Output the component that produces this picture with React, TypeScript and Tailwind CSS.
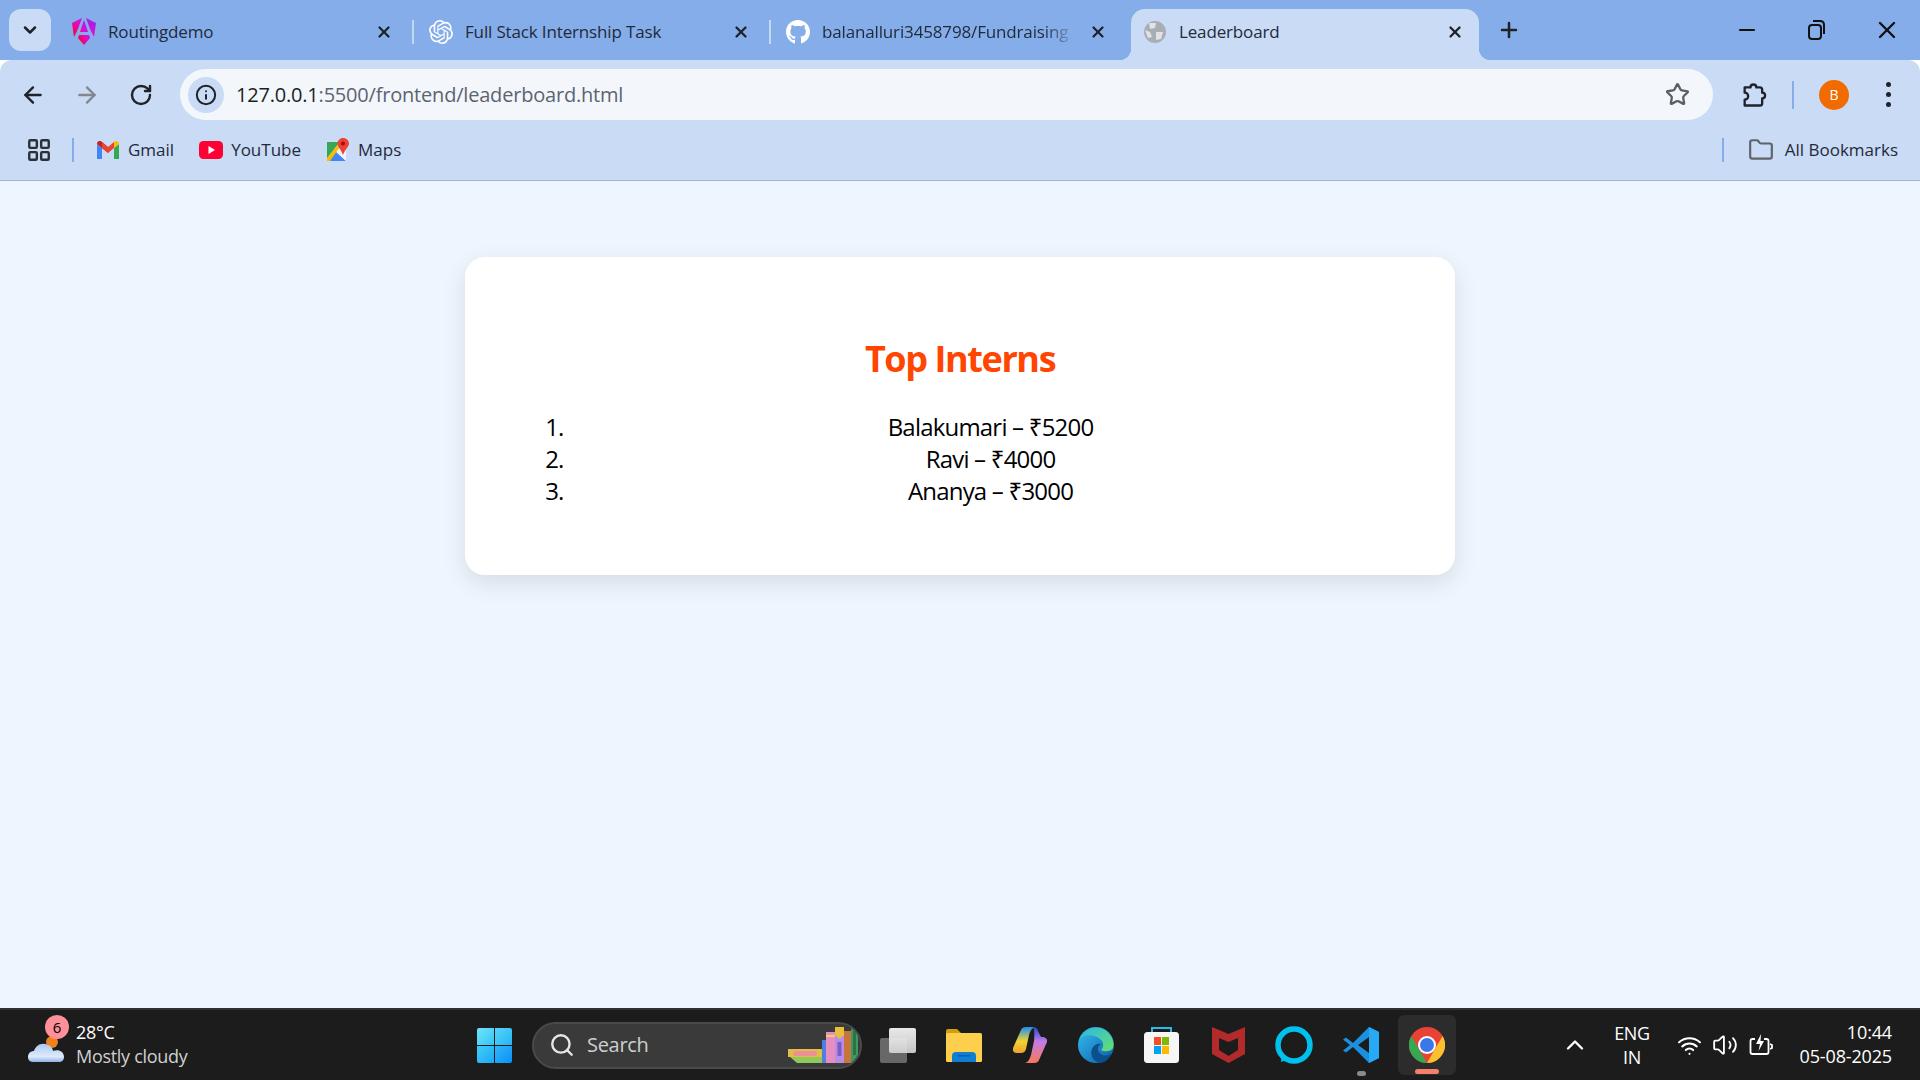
import { Search, Star, Folder, ArrowLeft, ArrowRight, RotateCw, X, Plus, Minus, ChevronDown, ChevronUp, Info, Wifi, Volume2, LayoutGrid } from "lucide-react";
import { FaGithub } from "react-icons/fa";
import { SiOpenai } from "react-icons/si";

const FONT = "font-['Open_Sans','Noto_Sans',sans-serif]";

const AngularIcon = () => (
  <svg width="24" height="28" viewBox="0 0 24 28">
    <defs>
      <linearGradient id="ng" x1="0" y1="1" x2="1" y2="0">
        <stop offset="0" stopColor="#f0060b" />
        <stop offset="0.5" stopColor="#e40ad0" />
        <stop offset="1" stopColor="#7c2ef8" />
      </linearGradient>
    </defs>
    <path d="M10 0 L0 5 L2 19 L6 11 Z M14 0 L24 5 L22 19 L18 11 Z" fill="url(#ng)" />
    <path d="M12 2 L8 14 L16 14 Z M7 17 L17 17 L18 20 L12 27 L6 20 Z" fill="url(#ng)" />
  </svg>
);

const GmailIcon = () => (
  <svg width="22" height="18" viewBox="0 0 22 18">
    <path d="M0 3 L0 18 L5 18 L5 7 Z" fill="#4285f4" />
    <path d="M22 3 L22 18 L17 18 L17 7 Z" fill="#34a853" />
    <path d="M0 3 C0 0 3 -1 5 1 L11 6 L11 12 L0 3 Z" fill="#c5221f" />
    <path d="M5 1 L11 6 L17 1 L17 7 L11 12 L5 7 Z" fill="#ea4335" />
    <path d="M17 1 C19 -1 22 0 22 3 L17 7 Z" fill="#fbbc04" />
  </svg>
);

const YoutubeIcon = () => (
  <svg width="24" height="18" viewBox="0 0 24 18">
    <rect width="24" height="18" rx="4.5" fill="#ff0033" />
    <path d="M9.5 5 L16 9 L9.5 13 Z" fill="#fff" />
  </svg>
);

const MapsIcon = () => (
  <svg width="22" height="24" viewBox="0 0 22 24">
    <path d="M0 4 L13 4 L0 20 Z" fill="#34a853" />
    <path d="M0 23 L0 20 L7 12 L19 23 Z" fill="#4285f4" />
    <path d="M7 12 L13 4 L19 9 L19 23 Z" fill="#f1f3f4" />
    <path d="M0 20 L13 4 L15 6 L3 23 L0 23 Z" fill="#fbbc04" />
    <path d="M16 0 C19.5 0 22 2.5 22 5.5 C22 9 18 11 16 17 C14 11 10.5 9 10.5 5.5 C10.5 2.5 13 0 16 0 Z" fill="#ea4335" />
    <circle cx="16" cy="5.5" r="2" fill="#a50e0e" />
  </svg>
);

const ExtensionIcon = () => (
  <svg width="28" height="28" viewBox="0 0 24 24" fill="none" stroke="#1f2329" strokeWidth="2" strokeLinejoin="round">
    <path d="M4 5.5 H9 a2.5 2.5 0 0 1 5 0 H17 a2 2 0 0 1 2 2 V10 a2.5 2.5 0 0 1 0 5 V19 a2 2 0 0 1 -2 2 H4 V16 a3 3 0 0 0 0 -6 Z" />
  </svg>
);

const WeatherIcon = () => (
  <svg width="38" height="30" viewBox="0 0 38 30">
    <defs>
      <linearGradient id="cloud" x1="0" y1="0" x2="0" y2="1">
        <stop offset="0" stopColor="#a9c9f4" />
        <stop offset="0.7" stopColor="#dfeafb" />
        <stop offset="1" stopColor="#8fb2e6" />
      </linearGradient>
    </defs>
    <circle cx="24" cy="9" r="6" fill="#f0821e" />
    <path d="M5 29 C1 29 0 26 0 24 C0 20 3 18 6 18 C8 12 14 9 20 12 C23 13 25 16 25 18 C31 16 36 19 36 24 C36 27 34 29 31 29 Z" fill="url(#cloud)" />
  </svg>
);

const WindowsIcon = () => (
  <div className="grid h-[35px] w-[35px] grid-cols-2 gap-[1px]">
    <div className="rounded-tl-[2px] bg-gradient-to-br from-[#70e2fb] to-[#2fc5f5]" />
    <div className="rounded-tr-[2px] bg-gradient-to-br from-[#55d5f9] to-[#22b4f4]" />
    <div className="rounded-bl-[2px] bg-gradient-to-br from-[#40cdf7] to-[#1ca8f5]" />
    <div className="rounded-br-[2px] bg-gradient-to-br from-[#2fb8f7] to-[#0c8ff6]" />
  </div>
);

const BooksIcon = () => (
  <svg width="76" height="40" viewBox="0 0 76 40">
    <path d="M0 22 L34 22 L34 30 L0 30 Z" fill="#e3bd4a" />
    <rect x="5" y="24" width="24" height="5" rx="2.5" fill="#ec8f97" />
    <path d="M2 30 L34 30 L34 36 L9 36 Z" fill="#8fc95a" />
    <rect x="34" y="13" width="4" height="23" fill="#4f7fe0" />
    <rect x="38" y="5" width="9" height="31" fill="#e58fc0" />
    <rect x="38" y="8" width="9" height="2" fill="#f0d060" />
    <rect x="47" y="0" width="9" height="36" fill="#b78de8" />
    <path d="M47 0 L56 0 L56 8 L51.5 12 L47 8 Z" fill="#e7bf3f" />
    <rect x="49.5" y="15" width="4" height="14" fill="#7a5bc8" />
    <rect x="56" y="4" width="7" height="32" fill="#c8743a" />
    <rect x="63" y="0" width="7" height="36" fill="#3f9a62" />
    <rect x="65" y="4" width="3" height="24" fill="#2a7548" />
  </svg>
);

const TaskViewIcon = () => (
  <div className="relative h-[35px] w-[36px]">
    <div className="absolute bottom-0 left-0 h-[25px] w-[27px] rounded-[2px] bg-[#686868]" />
    <div className="absolute right-0 top-0 h-[25px] w-[27px] rounded-[2px] bg-gradient-to-b from-white to-[#d8d8d8] opacity-90" />
  </div>
);

const ExplorerIcon = () => (
  <svg width="36" height="33" viewBox="0 0 36 33">
    <path d="M0 2 Q0 0 2 0 L11 0 L15 4 L15 8 L0 8 Z" fill="#d29e0a" />
    <rect x="0" y="4" width="36" height="29" rx="1.5" fill="#fdcf4d" />
    <path d="M6 33 L6 27 Q6 23 10 23 L26 23 Q30 23 30 27 L30 33 Z" fill="#0f7fd6" />
    <rect x="12" y="26" width="12" height="1.5" fill="#0a5ca8" />
  </svg>
);

const CopilotIcon = () => (
  <svg width="34" height="36" viewBox="0 0 34 36">
    <defs>
      <linearGradient id="cop1" x1="0" y1="0" x2="0" y2="1">
        <stop offset="0" stopColor="#1f8ef0" />
        <stop offset="0.55" stopColor="#f2d52f" />
        <stop offset="1" stopColor="#f0a030" />
      </linearGradient>
      <linearGradient id="cop2" x1="0" y1="0" x2="0" y2="1">
        <stop offset="0" stopColor="#1b4fd0" />
        <stop offset="0.4" stopColor="#c47ae8" />
        <stop offset="1" stopColor="#f77a55" />
      </linearGradient>
    </defs>
    <path d="M8 3 Q9 0 13 0 L22 0 Q18 1 16 8 L13 22 Q12 26 8 26 L3 26 Q-1 25 0 21 Z" fill="url(#cop1)" />
    <path d="M26 33 Q25 36 21 36 L12 36 Q16 35 18 28 L21 14 Q22 3 20 0 Q24 0 25 4 L28 10 L31 10 Q35 12 34 15 Z" fill="url(#cop2)" />
  </svg>
);

const EdgeIcon = () => (
  <svg width="36" height="36" viewBox="0 0 36 36">
    <defs>
      <linearGradient id="edge1" x1="0" y1="0" x2="1" y2="1">
        <stop offset="0" stopColor="#35c1f1" />
        <stop offset="1" stopColor="#0c59a4" />
      </linearGradient>
      <linearGradient id="edge2" x1="0" y1="0" x2="1" y2="1">
        <stop offset="0" stopColor="#2ab8e8" />
        <stop offset="1" stopColor="#66e06a" />
      </linearGradient>
    </defs>
    <circle cx="18" cy="18" r="18" fill="url(#edge1)" />
    <path d="M2 12 C6 1 18 -2 27 3 C33 7 37 14 35 21 C33 25 26 25 23 23 C26 20 26 15 22 12 C16 7 6 7 2 12 Z" fill="url(#edge2)" />
    <path d="M22 36 C14 34 11 26 15 20 C17 17 21 16 23 17 C19 19 19 25 23 27 C27 30 31 28 34 26 C31 32 27 36 22 36 Z" fill="#0b4f8f" />
  </svg>
);

const StoreIcon = () => (
  <svg width="35" height="36" viewBox="0 0 35 36">
    <path d="M8 6 L8 1 L27 1 L27 6" fill="none" stroke="#2bb8ea" strokeWidth="2" />
    <rect x="0" y="5" width="35" height="31" rx="3.5" fill="#f6f6f6" />
    <rect x="10" y="10" width="7" height="8" fill="#f25022" />
    <rect x="18" y="10" width="7" height="8" fill="#7fba00" />
    <rect x="10" y="19" width="7" height="8" fill="#00a4ef" />
    <rect x="18" y="19" width="7" height="8" fill="#ffb900" />
  </svg>
);

const McafeeIcon = () => (
  <svg width="33" height="36" viewBox="0 0 33 36">
    <path d="M0 0 L16.5 7 L33 0 L33 27 L16.5 36 L0 27 Z M7 11 L7 23 L16.5 29 L26 23 L26 11 L16.5 15 Z" fillRule="evenodd" fill="#b32a2a" />
  </svg>
);

const AlexaIcon = () => (
  <svg width="38" height="38" viewBox="0 0 38 38">
    <circle cx="19" cy="19" r="16" fill="none" stroke="#00c0ee" strokeWidth="5.5" />
    <path d="M6 36 L13 33 L7 28 Z" fill="#00c0ee" />
  </svg>
);

const VscodeIcon = () => (
  <svg width="36" height="36" viewBox="0 0 36 36">
    <path d="M26 0 L36 5 L36 31 L26 36 L10 20 L3 25.5 L0 23.5 L7 18 L0 12.5 L3 10.5 L10 16 Z M26 10 L15 18 L26 26 Z" fillRule="evenodd" fill="#1b8fe0" />
    <path d="M26 0 L36 5 L36 31 L26 36 Z" fill="#27a9f5" />
  </svg>
);

const ChromeIcon = () => (
  <svg width="36" height="36" viewBox="0 0 36 36">
    <circle cx="18" cy="18" r="18" fill="#ea4335" />
    <path d="M2.4 9 L11 24 L18 36 A18 18 0 0 1 2.4 9 Z" fill="#34a853" />
    <path d="M18 36 L26 22 L33.6 9 A18 18 0 0 1 18 36 Z" fill="#fbc02d" />
    <circle cx="18" cy="18" r="9" fill="#fff" />
    <circle cx="18" cy="18" r="7" fill="#3b78e7" />
  </svg>
);

const BatteryIcon = () => (
  <svg width="24" height="24" viewBox="0 0 24 24" fill="none" stroke="#fff" strokeWidth="1.8">
    <path d="M6 6 L3.5 6 Q1.5 6 1.5 8 L1.5 19 Q1.5 21 3.5 21 L17.5 21 Q19.5 21 19.5 19 L19.5 8 Q19.5 6 17.5 6 L15 6" />
    <path d="M21 11 L23 12 L23 15 L21 16" />
    <path d="M12 1 L7 11 L11 11 L9.5 18 L15 8 L11.5 8 Z" fill="#fff" stroke="none" />
  </svg>
);

type TabProps = { icon: React.ReactNode; title: string; fade?: boolean; divider?: boolean };

const Tab = ({ icon, title, fade, divider }: TabProps) => (
  <div className="flex h-[51px] w-[357px] items-center pb-[6px] pl-[12px]">
    <div className="flex w-[24px] shrink-0 justify-center">{icon}</div>
    <span className={`ml-[12px] w-[261px] overflow-hidden whitespace-nowrap text-[17px] tracking-[-0.15px] text-[#1f2a3a] ${fade ? "[mask-image:linear-gradient(to_right,black_85%,transparent_97%)]" : ""}`}>
      {title}
    </span>
    <X size={18} strokeWidth={3} className="ml-[6px] shrink-0 text-[#1f2329]" />
    {divider && <div className="ml-[19px] h-[24px] w-[2px] shrink-0 bg-[#c5d8f3]" />}
  </div>
);

const ActiveTab = () => (
  <div className="relative flex h-[51px] w-[348px] items-center rounded-t-[14px] bg-[#c9dbf5] pb-[6px] pl-[12px]">
    <div className="absolute bottom-0 left-[-12px] h-[12px] w-[12px] bg-[radial-gradient(circle_at_0_0,#85ade9_12px,#c9dbf5_12.5px)]" />
    <div className="absolute bottom-0 right-[-12px] h-[12px] w-[12px] bg-[radial-gradient(circle_at_100%_0,#85ade9_12px,#c9dbf5_12.5px)]" />
    <svg width="24" height="24" viewBox="0 0 24 24">
      <circle cx="12" cy="12" r="11" fill="#a9aeb5" />
      <path d="M6 3 L13 3 L12 8 L7 9 Z M13 12 L20 12 L18 19 L13 20 Z M2 10 L7 12 L9 17 L5 18 Z" fill="#dfe3e8" />
    </svg>
    <span className="ml-[12px] w-[267px] whitespace-nowrap text-[17px] tracking-[-0.15px] text-[#1f2a3a]">Leaderboard</span>
    <X size={18} strokeWidth={3} className="shrink-0 text-[#1f2329]" />
  </div>
);

const TabStrip = () => (
  <div className="flex h-[60px] items-end bg-[#85ade9]">
    <div className="mb-[9px] ml-[9px] flex h-[42px] w-[42px] items-center justify-center rounded-[12px] bg-[#c9dbf5]">
      <ChevronDown size={20} strokeWidth={3} className="text-[#1f2329]" />
    </div>
    <div className="ml-[9px] flex w-[1071px] shrink-0">
      <Tab icon={<AngularIcon />} title="Routingdemo" divider />
      <Tab icon={<SiOpenai size={24} className="text-white" />} title="Full Stack Internship Task" divider />
      <Tab icon={<FaGithub size={26} className="text-white" />} title="balanalluri3458798/Fundraising" fade />
    </div>
    <ActiveTab />
    <div className="mb-[9px] ml-[18px] flex h-[42px] items-center">
      <Plus size={24} strokeWidth={2.5} className="text-[#1f2329]" />
    </div>
    <div className="mb-[9px] ml-[214px] flex h-[42px] items-center gap-[45px]">
      <Minus size={24} strokeWidth={2.2} className="text-[#111]" />
      <svg width="24" height="24" viewBox="0 0 24 24" fill="none" stroke="#111" strokeWidth="2">
        <rect x="5" y="7" width="12" height="14" rx="3" />
        <path d="M9 3 L16 3 Q20 3 20 7 L20 16" />
      </svg>
      <X size={28} strokeWidth={2} className="text-[#111]" />
    </div>
  </div>
);

const AddressBar = () => (
  <div className="flex h-[60px] items-end rounded-t-[12px] bg-[#c9dbf5]">
    <div className="flex h-[51px] w-full items-center">
      <ArrowLeft size={26} strokeWidth={2.2} className="ml-[20px] text-[#1f2329]" />
      <ArrowRight size={26} strokeWidth={2.2} className="ml-[28px] text-[#83888f]" />
      <RotateCw size={24} strokeWidth={2.4} className="ml-[29px] text-[#1f2329]" />
      <div className="ml-[27px] flex h-[51px] w-[1533px] items-center rounded-full bg-[#f3f7fc] pl-[8px]">
        <div className="flex h-[36px] w-[36px] items-center justify-center rounded-full bg-[#c9dbf5]">
          <Info size={22} strokeWidth={2.2} className="text-[#1f2329]" />
        </div>
        <span className="ml-[12px] text-[20px] tracking-[-0.2px] text-[#5c6470]">
          <span className="text-[#1b1f24]">127.0.0.1</span>:5500/frontend/leaderboard.html
        </span>
        <Star size={25} strokeWidth={2.2} className="ml-auto mr-[23px] text-[#5a5f66]" />
      </div>
      <div className="ml-[27px]"><ExtensionIcon /></div>
      <div className="ml-[24px] h-[28px] w-[2px] bg-[#85ade9]" />
      <div className="ml-[25px] flex h-[30px] w-[30px] items-center justify-center rounded-full bg-[#f26b00] text-[14px] text-white">B</div>
      <div className="ml-[37px] flex flex-col gap-[5px]">
        <div className="h-[5px] w-[5px] rounded-full bg-[#1f2329]" />
        <div className="h-[5px] w-[5px] rounded-full bg-[#1f2329]" />
        <div className="h-[5px] w-[5px] rounded-full bg-[#1f2329]" />
      </div>
    </div>
  </div>
);

const BookmarkBar = () => (
  <div className="flex h-[61px] items-center border-b border-[#a5b4cc] bg-[#c9dbf5] text-[17px] tracking-[0px] text-[#1f2a3a]">
    <LayoutGrid size={26} strokeWidth={2.2} className="ml-[26px] text-[#2b3036]" />
    <div className="ml-[20px] h-[24px] w-[2px] bg-[#85ade9]" />
    <div className="ml-[23px] flex items-center gap-[9px]"><GmailIcon /><span>Gmail</span></div>
    <div className="ml-[25px] flex items-center gap-[8px]"><YoutubeIcon /><span>YouTube</span></div>
    <div className="ml-[26px] flex items-center gap-[9px]"><MapsIcon /><span>Maps</span></div>
    <div className="ml-auto h-[24px] w-[2px] bg-[#85ade9]" />
    <Folder size={26} strokeWidth={2} className="ml-[24px] text-[#5f646b]" />
    <span className="ml-[11px] mr-[22px]">All Bookmarks</span>
  </div>
);

const Leaderboard = () => (
  <div className="flex flex-1 justify-center bg-[#edf5ff] pt-[76px]">
    <div className="h-[318px] w-[990px] rounded-[20px] bg-white px-[60px] pt-[78px] shadow-[0_8px_24px_rgba(0,0,0,0.1)]">
      <h2 className="text-center text-[36px] font-bold leading-[48px] tracking-[-1.4px] text-[#ff4500]">Top Interns</h2>
      <ol className="mr-[-17px] mt-[28px] list-decimal pl-[44px] text-center text-[24px] leading-[32px] tracking-[-0.8px] text-black">
        <li>Balakumari – ₹5200</li>
        <li>Ravi – ₹4000</li>
        <li>Ananya – ₹3000</li>
      </ol>
    </div>
  </div>
);

const Taskbar = () => (
  <div className="flex h-[72px] items-center border-t-2 border-[#303030] bg-[#1c1c1c] text-white">
    <div className="relative ml-[28px] mt-[6px] flex w-[38px] justify-center">
      <WeatherIcon />
      <div className="absolute left-[17px] top-[-18px] flex h-[24px] w-[24px] items-center justify-center rounded-full bg-[#ff8f98] text-[15px] text-black">6</div>
    </div>
    <div className="mb-[2px] ml-[10px] w-[125px] whitespace-nowrap text-[18px] leading-[24px] tracking-[-0.3px]">
      <div>28°C</div>
      <div className="text-[#d0d0d0]">Mostly cloudy</div>
    </div>
    <div className="ml-[276px]"><WindowsIcon /></div>
    <div className="ml-[20px] flex h-[47px] w-[330px] items-center overflow-hidden rounded-full border-2 border-[#4a4a4a] bg-[#3a3a3a] pl-[15px]">
      <Search size={26} strokeWidth={2.2} className="text-[#e6e6e6]" />
      <span className="ml-[12px] text-[20px] tracking-[-0.3px] text-[#cfcfcf]">Search</span>
      <div className="ml-auto mr-[-4px] mt-[4px]"><BooksIcon /></div>
    </div>
    <div className="ml-[18px]"><TaskViewIcon /></div>
    <div className="ml-[30px]"><ExplorerIcon /></div>
    <div className="ml-[31px]"><CopilotIcon /></div>
    <div className="ml-[31px]"><EdgeIcon /></div>
    <div className="ml-[30px]"><StoreIcon /></div>
    <div className="ml-[33px]"><McafeeIcon /></div>
    <div className="ml-[30px]"><AlexaIcon /></div>
    <div className="relative ml-[30px]">
      <VscodeIcon />
      <div className="absolute bottom-[-13px] left-[14px] h-[5px] w-[9px] rounded-full bg-[#8a8a8a]" />
    </div>
    <div className="relative ml-[19px] flex h-[60px] w-[58px] items-center justify-center rounded-[6px] bg-[#2c2c2c]">
      <ChromeIcon />
      <div className="absolute bottom-[1px] left-[17px] h-[5px] w-[24px] rounded-full bg-[#f4806c]" />
    </div>
    <ChevronUp size={28} strokeWidth={2} className="ml-[105px] text-white" />
    <div className="ml-[25px] w-[36px] text-center text-[18px] leading-[24px] tracking-[-0.3px]">
      <div>ENG</div>
      <div>IN</div>
    </div>
    <Wifi size={25} strokeWidth={2} className="ml-[27px]" />
    <Volume2 size={26} strokeWidth={1.7} className="ml-[10px]" />
    <div className="ml-[11px]"><BatteryIcon /></div>
    <div className="mb-[2px] ml-auto mr-[28px] text-right text-[18px] leading-[24px] tracking-[-0.15px]">
      <div>10:44</div>
      <div>05-08-2025</div>
    </div>
  </div>
);

export default function App() {
  return (
    <div className={`flex h-[1080px] w-[1920px] flex-col overflow-hidden ${FONT}`}>
      <TabStrip />
      <AddressBar />
      <BookmarkBar />
      <Leaderboard />
      <Taskbar />
    </div>
  );
}
